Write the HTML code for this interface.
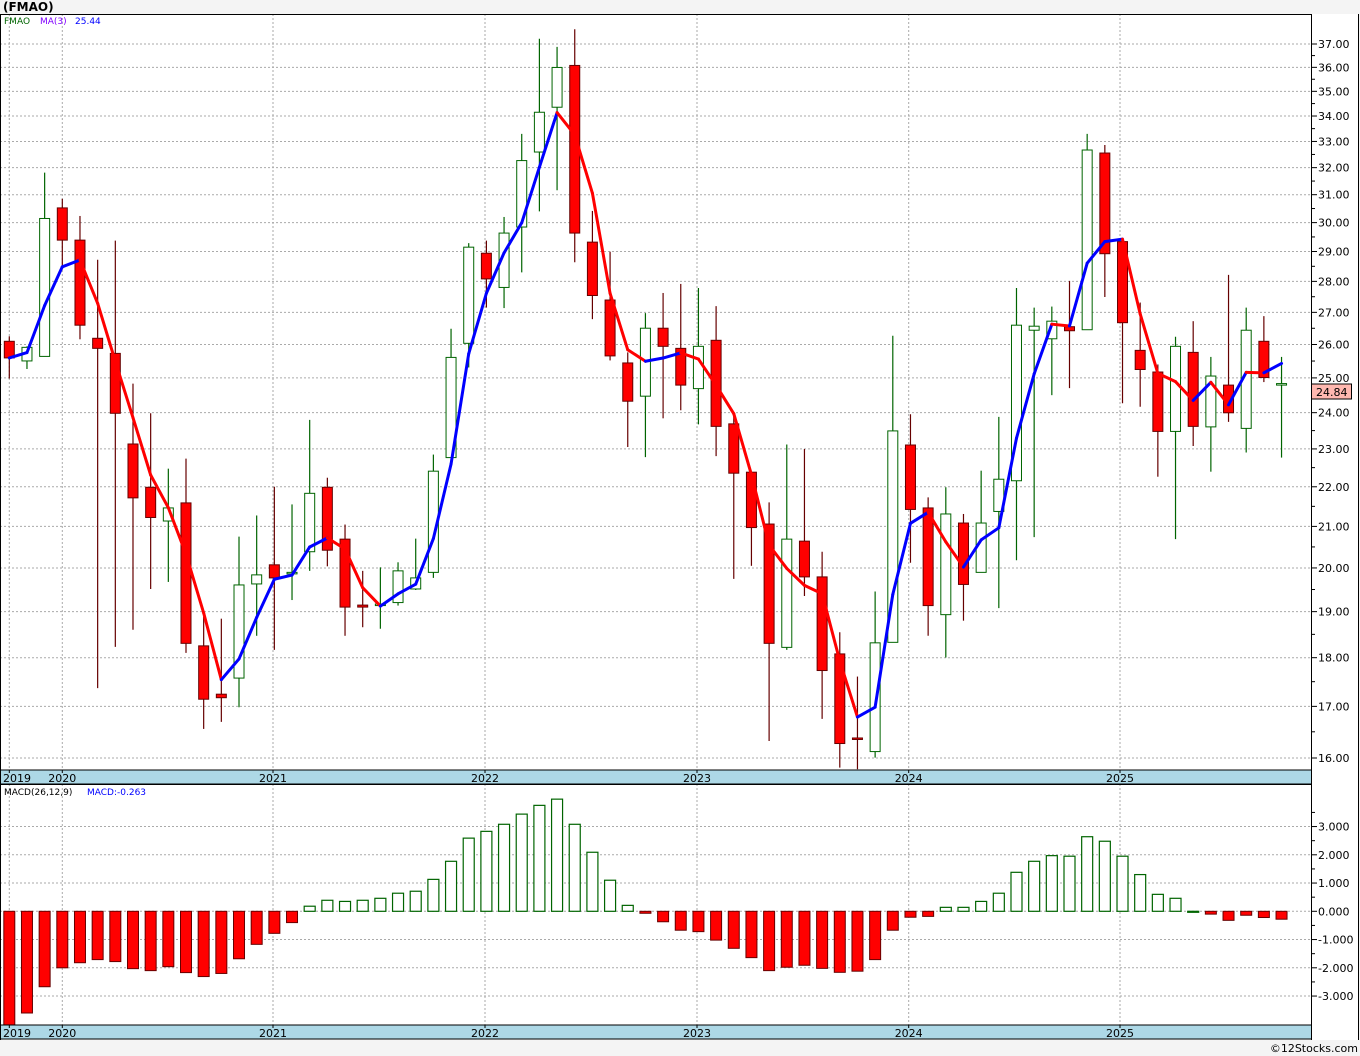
<!DOCTYPE html>
<html><head><meta charset="utf-8"><style>
html,body{margin:0;padding:0;background:#f4f4f4;}
svg{display:block;}
text{font-family:"DejaVu Sans","Liberation Sans",sans-serif;}
</style></head><body>
<svg id="s" width="1360" height="1056" viewBox="0 0 1360 1056" xmlns="http://www.w3.org/2000/svg"></svg>
<script>
const S=document.getElementById('s');let h='';
const C=[[668,678,711,752,'r'],[688,690,717,733,'g'],[343,434,708,708,'g'],[395,413,477,528,'r'],[429,477,646,674,'r'],[516,672,692,1367,'r'],[478,702,821,1285,'r'],[762,882,989,1251,'r'],[821,968,1028,1170,'r'],[931,1009,1035,1156,'g'],[911,999,1278,1297,'r'],[1225,1283,1389,1448,'r'],[1229,1379,1386,1434,'r'],[1066,1162,1347,1405,'g'],[1024,1142,1160,1263,'g'],[967,1122,1148,1291,'r'],[1002,1137,1140,1192,'g'],[834,980,1096,1134,'g'],[949,968,1093,1125,'r'],[1042,1071,1206,1263,'r'],[1134,1202,1206,1246,'r'],[1127,1200,1202,1249,'g'],[1117,1134,1197,1203,'g'],[1070,1148,1170,1172,'g'],[903,936,1137,1148,'g'],
[653,710,909,909,'g'],[483,491,682,730,'g'],[478,503,554,611,'r'],[431,463,571,612,'g'],[266,319,451,541,'g'],[77,223,302,420,'g'],[93,134,213,378,'g'],[58,130,463,521,'r'],[419,481,587,634,'r'],[500,596,707,716,'r'],[700,721,797,888,'r'],[622,652,787,908,'g'],[582,652,688,831,'r'],[564,692,765,815,'r'],[572,688,772,843,'g'],[608,676,847,906,'r'],[822,842,940,1150,'r'],[938,938,1048,1124,'r'],[998,1041,1278,1472,'r'],[883,1071,1286,1291,'g'],[892,1075,1146,1184,'r'],[1096,1146,1332,1428,'r'],[1256,1299,1477,1525,'r'],[1344,1466,1468,1528,'r'],[1175,1277,1493,1505,'g'],
[667,856,1276,1276,'g'],[823,884,1012,1118,'r'],[988,1009,1203,1263,'r'],[968,1021,1221,1306,'g'],[1021,1039,1161,1233,'r'],[935,1039,1137,1137,'g'],[828,952,1016,1208,'g'],[572,646,955,1113,'g'],[611,648,656,1067,'g'],[609,638,673,785,'g'],[558,649,657,771,'r'],[266,298,655,655,'g'],[288,304,504,590,'r'],[478,480,641,801,'r'],[601,696,734,808,'r'],[724,739,857,947,'r'],[669,688,857,1071,'g'],[638,700,847,886,'r'],[709,747,848,937,'g'],[546,765,820,838,'r'],[611,656,851,899,'g'],[628,678,750,759,'r'],[709,762,764,909,'g']];
const M=[-4.03,-3.6,-2.67,-2.0,-1.82,-1.71,-1.78,-2.03,-2.1,-1.96,-2.17,-2.31,-2.2,-1.68,-1.17,-0.78,-0.4,0.18,0.39,0.35,0.39,0.46,0.64,0.71,1.13,1.77,2.59,2.83,3.08,3.44,3.75,3.97,3.08,2.09,1.1,0.21,-0.07,-0.37,-0.67,-0.72,-1.02,-1.31,-1.64,-2.1,-1.98,-1.91,-2.02,-2.16,-2.12,-1.71,-0.67,-0.21,-0.18,0.14,0.14,0.35,0.64,1.38,1.77,1.97,1.95,2.64,2.48,1.95,1.3,0.6,0.46,0.0,-0.1,-0.32,-0.14,-0.22,-0.28];
const Z=z=>z/1.9865;
const P2Y=p=>44+851.7*(Math.log(37)-Math.log(p));
const Y2P=y=>Math.exp(Math.log(37)-(y-44)/851.7);
const X=i=>9.3+17.67*i;
// backgrounds
h+='<rect x="0" y="0" width="1360" height="1056" fill="#f4f4f4"/>';
h+='<rect x="0" y="14" width="1311" height="756" fill="#fff"/>';
h+='<rect x="0" y="784" width="1311" height="241" fill="#fff"/>';
h+='<rect x="1311" y="14" width="48" height="1026" fill="#fff"/>';
h+='<text x="3" y="11" font-size="12" font-weight="bold" fill="#000">(FMAO)</text>';
// years
const yrs=[[9.3,'2019'],[62.3,'2020'],[273,'2021'],[485,'2022'],[697,'2023'],[908.7,'2024'],[1120,'2025']];
yrs.forEach(([x])=>{h+=`<line x1="${x}" y1="14" x2="${x}" y2="770" stroke="#aaa" stroke-dasharray="2,2"/><line x1="${x}" y1="784" x2="${x}" y2="1025" stroke="#aaa" stroke-dasharray="2,2"/>`});
// price grid
for(let p=16;p<=37;p++){const y=P2Y(p);h+=`<line x1="0" y1="${y}" x2="1311" y2="${y}" stroke="#aaa" stroke-dasharray="2,2"/><line x1="1311" y1="${y}" x2="1317" y2="${y}" stroke="#000"/><text x="1318" y="${y+4}" font-size="11" fill="#000">${p}.00</text>`;
 const ym=P2Y(p+0.5);if(p<37)h+=`<line x1="1311" y1="${ym}" x2="1315" y2="${ym}" stroke="#000"/>`;}
// candles
C.forEach((c,i)=>{const x=X(i);const[hi,t,b,lo,col]=c.map((v,k)=>k<4?Z(v):v);
 const wc=col=='r'?'#660000':'#006400';
 h+=`<line x1="${x}" y1="${hi}" x2="${x}" y2="${lo}" stroke="${wc}" stroke-width="1.2"/>`;
 let bh=Math.max(b-t,1.5);
 if(col=='r')h+=`<rect x="${x-5}" y="${t}" width="10" height="${bh}" fill="#ff0000" stroke="#660000" stroke-width="1"/>`;
 else h+=`<rect x="${x-5}" y="${t}" width="10" height="${bh}" fill="#fff" stroke="#006400" stroke-width="1"/>`;});
// MA
const cl=C.map(c=>Y2P(Z(c[4]=='r'?c[2]:c[1])));
const ma=cl.map((v,i)=>{const a=cl.slice(Math.max(0,i-2),i+1);return a.reduce((s,q)=>s+q,0)/a.length;});
for(let i=1;i<ma.length;i++){const col=ma[i]>=ma[i-1]?'#0000ff':'#ff0000';h+=`<line x1="${X(i-1)}" y1="${P2Y(ma[i-1])}" x2="${X(i)}" y2="${P2Y(ma[i])}" stroke="${col}" stroke-width="3" stroke-linecap="round"/>`;}
h+='<text x="4" y="24" font-size="9" fill="#006400">FMAO</text><text x="40" y="24" font-size="9" fill="#8000ff">MA(3)</text><text x="75" y="24" font-size="9" fill="#0000ff">25.44</text>';
// price tag
h+='<rect x="1311.5" y="384" width="40" height="15" fill="#ffb8b0" stroke="#000" stroke-width="1"/><text x="1316" y="396" font-size="11" fill="#000">24.84</text>';
// MACD
const z0=911.3,u=28.25;
for(let v=-3;v<=3;v++){const y=z0-v*u;h+=`<line x1="0" y1="${y}" x2="1311" y2="${y}" stroke="#aaa" stroke-dasharray="2,2"/><line x1="1311" y1="${y}" x2="1317" y2="${y}" stroke="#000"/><text x="1318" y="${y+4}" font-size="11" fill="#000">${v<0?'-':''}${Math.abs(v)}.000</text>`;
 h+=`<line x1="1311" y1="${y-u/2}" x2="1315" y2="${y-u/2}" stroke="#000"/>`;}
M.forEach((v,i)=>{const x=X(i);const y=v>=0?z0-v*u:z0;const hh=Math.max(Math.abs(v)*u,1);
 if(v<0)h+=`<rect x="${x-5.5}" y="${y}" width="11" height="${hh}" fill="#ff0000" stroke="#660000"/>`;
 else h+=`<rect x="${x-5.5}" y="${y}" width="11" height="${hh}" fill="#fff" stroke="#006400" stroke-width="1.2"/>`;});
h+='<text x="4" y="795" font-size="9" fill="#000">MACD(26,12,9)</text><text x="87" y="795" font-size="9" fill="#0000ff">MACD:-0.263</text>';
// axis strips
[[770,784],[1025,1039]].forEach(([a,b])=>{h+=`<rect x="0" y="${a}" width="1311" height="${b-a}" fill="#add8e6"/><line x1="0" y1="${a}" x2="1311" y2="${a}" stroke="#000"/><line x1="0" y1="${b}" x2="1311" y2="${b}" stroke="#000"/>`;
 yrs.forEach(([x,t],k)=>{const tx=k==0?3:x-14;h+=`<line x1="${x}" y1="${a}" x2="${x}" y2="${a+3}" stroke="#000"/><text x="${tx}" y="${b-2}" font-size="11" fill="#000">${t}</text>`;});});
// borders
h+='<line x1="0" y1="14.5" x2="1311" y2="14.5" stroke="#000"/><line x1="0" y1="784.5" x2="1311" y2="784.5" stroke="#000"/>';
h+='<line x1="1311.5" y1="14" x2="1311.5" y2="1040" stroke="#000"/><line x1="1358.5" y1="14" x2="1358.5" y2="1040" stroke="#000"/><line x1="0.5" y1="14" x2="0.5" y2="1040" stroke="#000"/>';
h+='<text x="1358" y="1052" font-size="11" text-anchor="end" fill="#000">©12Stocks.com</text>';
S.innerHTML=h;
</script>
</body></html>
